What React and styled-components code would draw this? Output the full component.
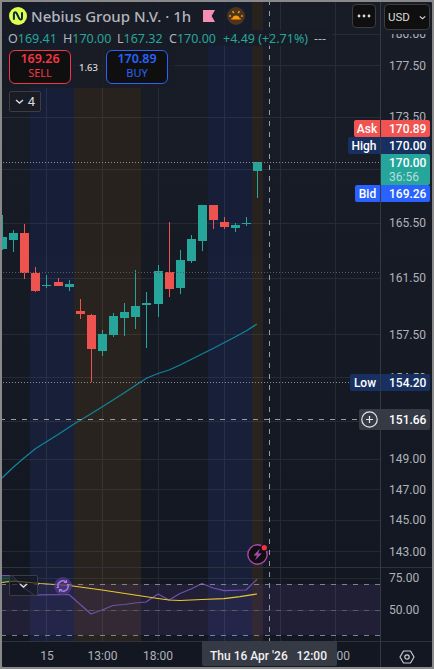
import styled, { createGlobalStyle } from 'styled-components';

const GlobalStyle = createGlobalStyle`
  * {
    box-sizing: border-box;
  }

  body {
    margin: 0;
    background: #898989;
    font-family: Roboto, 'Liberation Sans', sans-serif;
  }
`;

const Frame = styled.main`
  position: relative;
  display: grid;
  grid-template-columns: 378px 52px;
  grid-template-rows: 640px 25px;
  width: 434px;
  height: 669px;
  border: 2px solid #898989;
  border-radius: 3px;
  background: linear-gradient(#191d28, #131722 90%);
  overflow: hidden;
`;

const Plot = styled.section`
  position: relative;
  border-bottom: 1px solid #2e323c;

  > svg {
    display: block;
  }
`;

const PriceScale = styled.aside`
  border-left: 1px solid #363943;
  border-bottom: 1px solid #2e323c;

  svg {
    display: block;
  }
`;

const AxisText = styled.text`
  fill: #b0b2ba;
  font-size: 12px;
  text-anchor: ${({ $middle }) => ($middle ? 'middle' : 'start')};
`;

const TimeScale = styled.footer`
  position: relative;

  > svg {
    display: block;
  }
`;

const TimeTag = styled.div`
  position: absolute;
  left: 200px;
  top: -1px;
  display: flex;
  align-items: center;
  justify-content: space-between;
  width: 135px;
  height: 25px;
  padding: 5px 10px 0 8px;
  border-radius: 0 0 2px 2px;
  background: #363a45;
  color: #f0f0f2;
  font-size: 12px;
  font-weight: 500;
  white-space: pre;
`;

const Corner = styled.div`
  display: flex;
  align-items: center;
  justify-content: center;
  border-left: 1px solid #363943;
  padding-top: 4px;
`;

const Legend = styled.header`
  position: absolute;
  top: 0;
  left: 0;
  display: flex;
  flex-direction: column;
  align-items: flex-start;
`;

const LegendRow = styled.div`
  display: flex;
  align-items: center;
  height: ${({ $height }) => $height}px;
  padding: ${({ $pad }) => $pad || '0 6px'};
  background: rgba(24, 28, 39, 0.8);
`;

const Symbol = styled.h1`
  width: 160px;
  margin: 0 12px 0 4px;
  color: #b2b4bc;
  font: 500 15px 'Noto Sans', sans-serif;
  white-space: nowrap;
`;

const Flag = styled.span`
  width: 12px;
  height: 12px;
  margin-right: 12px;
  background: #f48fb1;
  clip-path: polygon(0 0, 100% 0, 72% 50%, 100% 100%, 0 100%);
`;

const Ohlc = styled.span`
  width: ${({ $width }) => $width}px;
  color: #b2b4bc;
  font: 12.5px 'Noto Sans', sans-serif;
  white-space: nowrap;

  b {
    color: #26a69a;
    font-weight: 400;
  }
`;

const TradeButton = styled.button`
  display: flex;
  flex-direction: column;
  align-items: center;
  justify-content: center;
  width: 62px;
  height: 34px;
  padding: 0 0 2px;
  border: 1px solid ${({ $color }) => $color};
  border-radius: 6px;
  background: #0f0f0f;
  color: ${({ $color }) => $color};
  font: 11px/14px 'Noto Sans', sans-serif;

  strong {
    font-size: 12.5px;
    font-weight: 600;
    line-height: 14px;
  }
`;

const Spread = styled.span`
  width: 35px;
  color: #dbdbdb;
  font: 500 9.5px 'Noto Sans', sans-serif;
  text-align: center;
`;

const ToolButton = styled.button`
  display: flex;
  align-items: center;
  justify-content: center;
  gap: ${({ $gap }) => $gap || 0}px;
  width: ${({ $width }) => $width}px;
  height: ${({ $height }) => $height}px;
  padding: 0;
  border: 1px solid #3d3d40;
  border-radius: ${({ $radius }) => $radius || 4}px;
  background: ${({ $bg }) => $bg || '#0f0f0f'};
  color: #dbdbdb;
  font: ${({ $size }) => $size || 12}px Roboto, sans-serif;
`;

const StudyToggle = styled.div`
  position: absolute;
  left: 7px;
  top: 573px;
`;

const IndicatorToggle = styled.div`
  padding: 3px 7px;
`;

const TopRight = styled.div`
  position: absolute;
  top: 0;
  right: 0;
  display: flex;
  align-items: flex-start;
  padding-top: 2px;
`;

const CurrencyBox = styled.div`
  width: 51px;
  height: 30px;
  margin-left: 5px;
  padding-left: 3px;
  background: #191d28;
`;

const PriceTag = styled.div`
  position: absolute;
  right: 2px;
  top: ${({ $top }) => $top}px;
  display: flex;
  height: ${({ $height }) => $height || 17}px;
  color: #fff;
  font-size: 12px;
  font-weight: 500;
  line-height: 17px;
`;

const TagName = styled.span`
  display: flex;
  align-items: center;
  justify-content: center;
  width: ${({ $width }) => $width}px;
  padding-top: ${({ $drop }) => $drop || 0}px;
  margin-right: 1px;
  border-radius: 2px 0 0 2px;
  background: ${({ $bg }) => $bg};
`;

const TagValue = styled.span`
  display: flex;
  flex-direction: column;
  justify-content: center;
  width: 49px;
  padding: 1px 0 0 8px;
  border-radius: 0 2px 2px 0;
  background: ${({ $bg }) => $bg};

  small {
    margin-top: -3px;
    color: #b4dfda;
    font-size: 12px;
    font-weight: 400;
  }
`;

const UP = '#26a69a';
const DOWN = '#ef5350';

// left edge, body top, body bottom, wick top, wick bottom, colour
const candles = [
  [-2, 237, 249, 215, 250, UP],
  [9, 233, 240, 230, 252, UP],
  [20, 233, 273, 224, 279, DOWN],
  [31, 273, 291, 267, 292, DOWN],
  [42, 285, 286, 275, 288, UP],
  [54, 282, 286, 278, 286, DOWN],
  [65, 284, 287, 280, 291, UP],
  [76, 311, 314, 299, 319, DOWN],
  [87, 315, 349, 314, 382, DOWN],
  [98, 334, 351, 330, 356, UP],
  [109, 316, 335, 313, 337, UP],
  [120, 312, 318, 303, 336, UP],
  [131, 306, 317, 270, 329, UP],
  [142, 303, 305, 292, 348, UP],
  [154, 271, 304, 265, 317, UP],
  [165, 272, 289, 222, 297, DOWN],
  [176, 260, 288, 250, 294, UP],
  [187, 239, 261, 235, 263, UP],
  [198, 205, 241, 205, 251, UP],
  [209, 205, 220, 205, 229, DOWN],
  [220, 222, 227, 217, 229, DOWN],
  [231, 225, 228, 223, 232, UP],
  [242, 223, 224, 217, 226, UP],
  [253, 162, 171, 162, 198, UP],
];

const sessions = [
  [30, 44, '#181f38'],
  [74, 67, '#28231f'],
  [208, 44, '#181f38'],
  [252, 11, '#28231f'],
];

const columns = [46, 102, 158, 224, 280, 335];
const rows = [34, 65, 117, 169, 223, 278, 334, 377, 421, 459, 489, 520, 551, 578, 610];

const prices = [
  ['180.00', 34],
  ['177.50', 66],
  ['173.50', 117],
  ['165.50', 223],
  ['161.50', 278],
  ['157.50', 335],
  ['154.50', 378],
  ['149.00', 459],
  ['147.00', 490],
  ['145.00', 520],
  ['143.00', 552],
  ['75.00', 578],
  ['50.00', 610],
];

const hours = [
  ['15', 47],
  ['13:00', 102.5],
  ['18:00', 158],
  ['17:00', 335],
];

const tags = [
  { name: 'Ask', value: '170.89', top: 118, width: 26, bg: '#f05350' },
  { name: 'High', value: '170.00', top: 135, width: 32, bg: '#17305f' },
  { name: 'Bid', value: '169.26', top: 183, width: 25, bg: '#2962ff' },
  { name: 'Low', value: '154.20', top: 372, width: 30, bg: '#17305f' },
];

function Chart() {
  return (
    <svg width='378' height='639' viewBox='2 2 378 639'>
      {sessions.map(([x, width, fill]) => (
        <rect key={x} x={x} y='2' width={width} height='640' fill={fill} />
      ))}
      <rect x='2' y='584' width='378' height='51' fill='#7e57c2' opacity='.13' />
      <g fill='#fff' opacity='.07'>
        {columns.map((x) => (
          <rect key={x} x={x} y='2' width='1' height='640' />
        ))}
        {rows.map((y) => (
          <rect key={y} x='2' y={y} width='378' height='1' />
        ))}
      </g>
      <rect x='2' y='567' width='378' height='1' fill='#2e323c' />

      {candles.map(([x, top, bottom, high, low, fill]) => (
        <g key={x} fill={fill} shapeRendering='crispEdges'>
          <rect x={x + 4} y={high} width='1' height={low - high} />
          <rect x={x} y={top} width='9' height={bottom - top} />
        </g>
      ))}
      <g strokeDasharray='1 2' fill='none'>
        <path d='M3 162.5H380' stroke='#8d8e8f' />
        <path d='M3 272.5H380' stroke='#5c5a59' />
        <path d='M3 382.5H380' stroke='#8d8e8f' />
      </g>
      <polyline
        points='2,478 13,467.5 24,458 35,449 46,442 58,434.5 74,424 80,420.5 102,407 124,393 139,383 147,378 158,373.5 169,370 180,365 191,359.5 213,348.5 235,337 246,331 257,324'
        fill='none'
        stroke='#11839b'
        strokeWidth='1.3'
      />

      <path d='M2 575L11 575L19 582H2Z' fill='#26a69a' opacity='.25' />
      <g fill='none' strokeWidth='1.2' strokeLinejoin='round'>
        <polyline
          points='2,575.5 12,575.5 24,588 35,595.5 41,594.8 69,594.5 91,614 102,610 113,605.5 124,604.5 135,603 146,602 158,594 169,600 180,593.5 191,589 202,583.5 213,588 224,590.7 246,590 257,579.3'
          stroke='#7350ad'
        />
        <polyline
          points='2,582.5 14,581 40,583.5 69,585.5 102,590 135,595 158,598.5 169,600 180,600.5 202,599.5 224,598.7 240,596.7 257,594'
          stroke='#ebc82f'
        />
      </g>
      <g fill='none' strokeDasharray='5 6' strokeDashoffset='1'>
        <path d='M2 584.5H380M2 635.5H380' stroke='#80828b' />
        <path d='M2 610.5H380' stroke='#595a63' />
      </g>
      <g fill='none' stroke='#9b9da3'>
        <path d='M2 419.5H380' strokeDasharray='5 6' strokeDashoffset='2' />
        <path d='M269.5 2V642' strokeDasharray='5 6' strokeDashoffset='2' />
      </g>

      <g transform='translate(63 586)' fill='none' stroke='#a67bea' strokeWidth='1.5'>
        <circle r='9' fill='#543b81' stroke='none' opacity='.75' />
        <path d='M-5 1A5 5 0 0 1 3 -4M5 -1A5 5 0 0 1 -3 4' />
        <path d='M3.5 -6V-3.5H1M-3.5 6V3.5H-1M-6.5 1.5H-4M4 -1.5H6.5' strokeWidth='1.2' />
      </g>
      <g transform='translate(257.5 554.5)'>
        <circle r='9.7' fill='#0f0f0f' stroke='#a946b5' strokeWidth='1.4' />
        <path d='M1.8 -5L-3.5 .8H-.2L-1.8 5L3.8 -.8H.4Z' fill='#a946b5' stroke='#a946b5' strokeWidth='.5' />
        <circle cx='6.8' cy='-6.8' r='3.8' fill='#131722' />
        <circle cx='6.8' cy='-6.8' r='2.6' fill='#f7313f' />
      </g>
    </svg>
  );
}

function Chevron({ size = 9 }) {
  return (
    <svg width={size} height={size} viewBox='0 0 9 9' fill='none' stroke='currentColor' strokeWidth='1.4'>
      <path d='M1 3L4.5 6L8 3' />
    </svg>
  );
}

function Logo() {
  return (
    <svg width='18' height='18' viewBox='0 0 18 18'>
      <circle cx='9' cy='9' r='9' fill='#e0ff4f' />
      <path
        d='M4.9 12.8V7.2C4.9 4.8 7 4.8 7.9 6.8L10 11.1C11 13.2 13 13.1 13 10.8V5.2'
        fill='none'
        stroke='#052b42'
        strokeWidth='2'
      />
    </svg>
  );
}

function Sunrise() {
  return (
    <svg width='18' height='18' viewBox='0 0 18 18'>
      <circle cx='9' cy='9' r='9' fill='#4b3520' />
      <path d='M4.3 12.5V11.3H5.4A3.7 3.7 0 0 1 12.6 11.3H13.7V12.5Z' fill='#ff9800' />
      <path
        d='M5.6 4.2L6.8 6M12.4 4.2L11.2 6M2.2 9H4M14 9H15.8'
        stroke='#ff9800'
        strokeWidth='1.5'
      />
    </svg>
  );
}

export default function App() {
  return (
    <>
      <GlobalStyle />
      <Frame>
        <Plot>
          <Chart />
          <Legend>
            <LegendRow $height={28} $pad='0 7px'>
              <Logo />
              <Symbol>Nebius Group N.V. · 1h</Symbol>
              <Flag />
              <Sunrise />
            </LegendRow>
            <LegendRow $height={16}>
              <Ohlc $width={55}>O<b>169.41</b></Ohlc>
              <Ohlc $width={54}>H<b>170.00</b></Ohlc>
              <Ohlc $width={52}>L<b>167.32</b></Ohlc>
              <Ohlc $width={54}>C<b>170.00</b></Ohlc>
              <Ohlc $width={91}><b>+4.49 (+2.71%)</b></Ohlc>
              <Ohlc $width={12}>---</Ohlc>
            </LegendRow>
            <LegendRow $height={42} $pad='3px 7px 3px'>
              <TradeButton $color='#f23645'>
                <strong>169.26</strong>
                SELL
              </TradeButton>
              <Spread>1.63</Spread>
              <TradeButton $color='#2962ff'>
                <strong>170.89</strong>
                BUY
              </TradeButton>
            </LegendRow>
            <IndicatorToggle>
              <ToolButton $width={32} $height={21} $gap={4} $radius={2} $size={13} $bg='#191c25'>
                <Chevron />
                4
              </ToolButton>
            </IndicatorToggle>
          </Legend>
          <StudyToggle>
            <ToolButton $width={29} $height={21} $radius={2} $bg='rgba(19, 23, 34, .65)'>
              <Chevron />
            </ToolButton>
          </StudyToggle>
        </Plot>

        <PriceScale>
          <svg width='51' height='639' viewBox='381 2 51 639'>
            <rect x='381' y='567' width='51' height='1' fill='#2e323c' />
            {prices.map(([label, y]) => (
              <AxisText key={label} x='389' y={y + 4}>{label}</AxisText>
            ))}
          </svg>
        </PriceScale>

        <TimeScale>
          <svg width='378' height='25' viewBox='2 642 378 25'>
            {hours.map(([label, x]) => (
              <AxisText key={label} $middle x={x} y='660'>{label}</AxisText>
            ))}
          </svg>
          <TimeTag>
            <span>Thu 16 Apr '26</span>
            <span>12:00</span>
          </TimeTag>
        </TimeScale>

        <Corner>
          <svg width='16' height='14' viewBox='0 0 16 14' fill='none' stroke='#c9cad0' strokeWidth='1.2'>
            <path d='M4.5 1H11.5L15 7L11.5 13H4.5L1 7Z' strokeLinejoin='round' />
            <circle cx='8' cy='7' r='2.2' />
          </svg>
        </Corner>

        {tags.map(({ name, value, top, width, bg }) => (
          <PriceTag key={name} $top={top}>
            <TagName $width={width} $drop={1} $bg={bg}>{name}</TagName>
            <TagValue $bg={bg}>{value}</TagValue>
          </PriceTag>
        ))}
        <PriceTag $top={152} $height={31}>
          <TagValue $bg={UP}>
            170.00
            <small>36:56</small>
          </TagValue>
        </PriceTag>
        <PriceTag $top={407} $height={21}>
          <TagName $width={21} $bg='#363a45'>
            <svg width='17' height='17' viewBox='0 0 17 17' fill='none' stroke='#e6e6e8'>
              <circle cx='8.5' cy='8.5' r='7.7' strokeWidth='1.2' />
              <path d='M8.5 5V12M5 8.5H12' strokeWidth='1.2' />
            </svg>
          </TagName>
          <TagValue $bg='#363a45'>151.66</TagValue>
        </PriceTag>

        <TopRight>
          <ToolButton $width={24} $height={24}>
            <svg width='14' height='4' viewBox='0 0 14 4' fill='currentColor'>
              <circle cx='2' cy='2' r='1.4' />
              <circle cx='7' cy='2' r='1.4' />
              <circle cx='12' cy='2' r='1.4' />
            </svg>
          </ToolButton>
          <CurrencyBox>
            <ToolButton $width={46} $height={26} $gap={9} $size={11.5}>
              USD
              <Chevron size={7} />
            </ToolButton>
          </CurrencyBox>
        </TopRight>
      </Frame>
    </>
  );
}
